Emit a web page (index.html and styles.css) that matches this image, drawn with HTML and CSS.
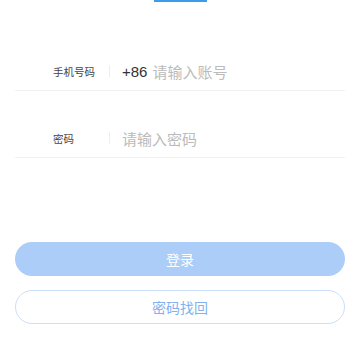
FILE: index.html
```html
<!DOCTYPE html>
<html lang="zh-CN">
<head>
  <meta charset="UTF-8">
  <title>登录</title>
  <link rel="stylesheet" href="styles.css">
</head>
<body>
  <div class="tab-bar"></div>

  <form class="login-form">
    <div class="field">
      <label class="field-label" for="phone">手机号码</label>
      <span class="field-sep"></span>
      <span class="prefix">+86</span>
      <input type="text" id="phone" class="field-input" placeholder="请输入账号">
    </div>

    <div class="field">
      <label class="field-label" for="password">密码</label>
      <span class="field-sep"></span>
      <input type="password" id="password" class="field-input" placeholder="请输入密码">
    </div>

    <button type="submit" class="btn btn-primary">登录</button>
    <button type="button" class="btn btn-outline">密码找回</button>
  </form>
</body>
</html>
```

FILE: styles.css
```css
body {
  margin: 0;
  padding: 0 15px;
  background: #fff;
  font-family: "Noto Sans CJK SC", "Noto Sans", sans-serif;
  color: #333;
}
.tab-bar {
  width: 53px;
  height: 2px;
  margin: 0 auto;
  background: #3d9be9;
}
.login-form {
  margin-top: 50px;
}
.field {
  display: flex;
  align-items: center;
  height: 38px;
  border-bottom: 1px solid #f0f0f0;
  margin-bottom: 28px;
}
.field-label {
  width: 56px;
  padding-left: 38px;
  font-size: 10.5px;
  color: #444;
}
.field-sep {
  width: 1px;
  height: 12px;
  background: #eee;
  margin-right: 12px;
}
.prefix {
  font-family: "Liberation Sans", Arial, sans-serif;
  font-size: 15px;
  color: #333;
  margin-right: 5px;
}
.field-input {
  flex: 1;
  border: none;
  outline: none;
  padding: 0;
  font-family: inherit;
  font-size: 15px;
  color: #333;
  background: transparent;
}
.field-input::placeholder {
  color: #bbb;
}
.btn {
  display: block;
  width: 100%;
  height: 34px;
  border-radius: 17px;
  font-family: inherit;
  font-size: 14px;
  box-sizing: border-box;
}
.btn-primary {
  margin-top: 84px;
  border: none;
  background: #abcdf8;
  color: #fff;
}
.btn-outline {
  margin-top: 14px;
  border: 1px solid #c9dffa;
  background: #fff;
  color: #80b1f0;
}
```
